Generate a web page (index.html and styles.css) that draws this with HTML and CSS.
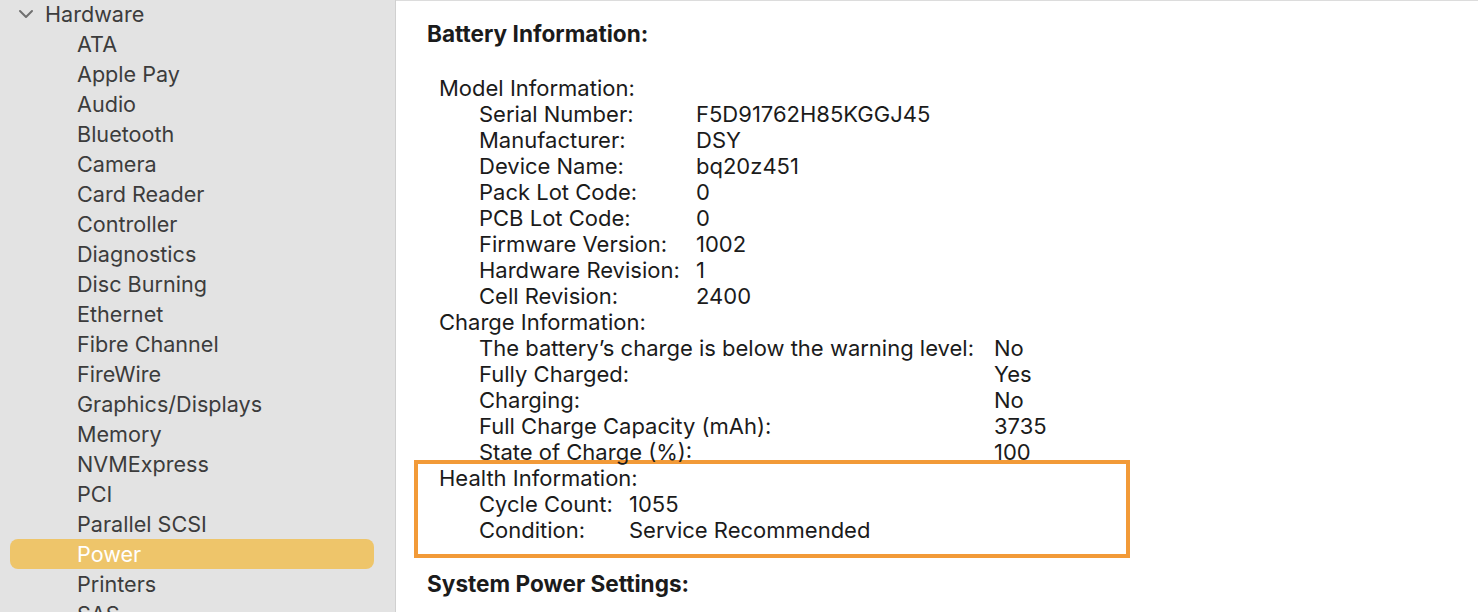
FILE: index.html
```html
<!DOCTYPE html>
<html lang="en">

<head>
  <meta charset="UTF-8">
  <meta name="viewport" content="width=device-width, initial-scale=1.0">
  <title>System Information</title>
  <link rel="stylesheet" href="styles.css">
</head>

<body>
  <div class="sidebar">
    <ul class="tree">
      <li class="group">
        <svg class="chevron" width="16" height="10" viewBox="0 0 16 10">
          <polyline points="2,2 8,8 14,2" fill="none" stroke="#707070" stroke-width="2" stroke-linecap="round" stroke-linejoin="round" />
        </svg>
        Hardware
      </li>
      <li>ATA</li>
      <li>Apple Pay</li>
      <li>Audio</li>
      <li>Bluetooth</li>
      <li>Camera</li>
      <li>Card Reader</li>
      <li>Controller</li>
      <li>Diagnostics</li>
      <li>Disc Burning</li>
      <li>Ethernet</li>
      <li>Fibre Channel</li>
      <li>FireWire</li>
      <li>Graphics/Displays</li>
      <li>Memory</li>
      <li>NVMExpress</li>
      <li>PCI</li>
      <li>Parallel SCSI</li>
      <li class="selected">Power</li>
      <li>Printers</li>
      <li>SAS</li>
    </ul>
  </div>

  <div class="content">
    <h2>Battery Information:</h2>

    <div class="section">
      <div class="heading">Model Information:</div>
      <div class="rows model">
        <span>Serial Number:</span><span>F5D91762H85KGGJ45</span>
        <span>Manufacturer:</span><span>DSY</span>
        <span>Device Name:</span><span>bq20z451</span>
        <span>Pack Lot Code:</span><span>0</span>
        <span>PCB Lot Code:</span><span>0</span>
        <span>Firmware Version:</span><span>1002</span>
        <span>Hardware Revision:</span><span>1</span>
        <span>Cell Revision:</span><span>2400</span>
      </div>

      <div class="heading">Charge Information:</div>
      <div class="rows charge">
        <span>The battery’s charge is below the warning level:</span><span>No</span>
        <span>Fully Charged:</span><span>Yes</span>
        <span>Charging:</span><span>No</span>
        <span>Full Charge Capacity (mAh):</span><span>3735</span>
        <span>State of Charge (%):</span><span>100</span>
      </div>

      <div class="highlight">
        <div class="heading">Health Information:</div>
        <div class="rows health">
          <span>Cycle Count:</span><span>1055</span>
          <span>Condition:</span><span>Service Recommended</span>
        </div>
      </div>
    </div>

    <h2 class="next">System Power Settings:</h2>
  </div>
</body>

</html>
```

FILE: styles.css
```css
body {
  margin: 0;
  display: flex;
  height: 612px;
  overflow: hidden;
  font-family: Inter, "Noto Sans", sans-serif;
}

/* left source list */
.sidebar {
  width: 395px;
  background: #e3e3e3;
  border-right: 1px solid #d0d0d0;
  flex-shrink: 0;
  font-size: 21.6px;
}

.tree {
  list-style: none;
  margin: -1px 0 0;
  padding: 0;
  color: #3c3c3c;
}

.tree li {
  height: 30px;
  line-height: 30px;
  margin: 0 21px 0 10px;
  padding-left: 67px;
  border-radius: 8px;
  white-space: nowrap;
}

.tree li.group {
  display: flex;
  align-items: center;
  padding-left: 35px;
  position: relative;
}

.chevron {
  position: absolute;
  left: 8px;
  top: 10px;
}

.tree li.selected {
  background: #eec56a;
  color: #fff;
}

/* right detail pane */
.content {
  flex: 1;
  background: #fff;
  border-top: 1px solid #dcdcdc;
  padding: 0 0 0 31px;
  color: #1b1b1b;
  font-size: 22px;
}

.content h2 {
  font-size: 22.6px;
  font-weight: 700;
  margin: 20px 0 0;
  line-height: 26px;
}

.content h2.next {
  margin-top: 13px;
}

.section {
  margin-top: 28px;
}

.heading {
  padding-left: 12px;
  line-height: 26px;
}

.rows {
  display: grid;
  padding-left: 52px;
  line-height: 26px;
}

.rows span {
  white-space: nowrap;
}

.model {
  grid-template-columns: 217px auto;
}

.charge {
  grid-template-columns: 515px auto;
}

.health {
  grid-template-columns: 150px auto;
}

/* outlined health block */
.highlight {
  width: 699px;
  margin: -5px 0 0 -13px;
  padding: 1px 0 11px 9px;
  border: 4px solid #f29a38;
}
```
